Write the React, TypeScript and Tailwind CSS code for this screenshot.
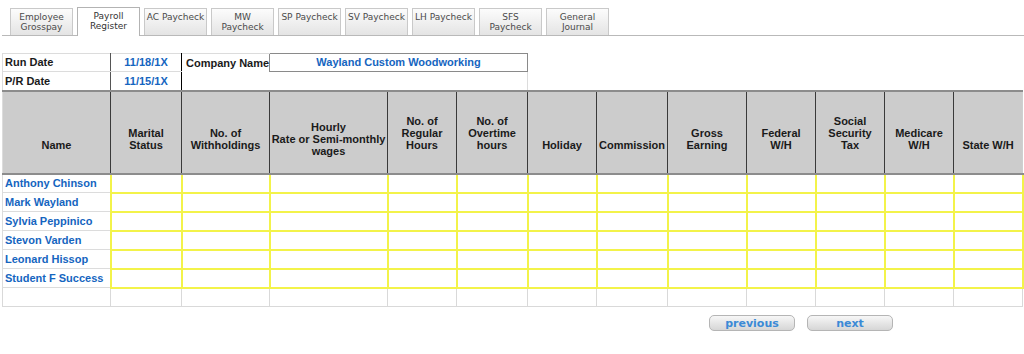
import { clsx } from 'clsx';

const tabs = [
  ['Employee', 'Grosspay'],
  ['Payroll', 'Register'],
  ['AC Paycheck'],
  ['MW', 'Paycheck'],
  ['SP Paycheck'],
  ['SV Paycheck'],
  ['LH Paycheck'],
  ['SFS', 'Paycheck'],
  ['General', 'Journal'],
];

const colWidths = [108, 71, 88, 118, 69, 71, 69, 71, 79, 69, 69, 69, 69];

const headers: { lines: string[]; pb?: string }[] = [
  { lines: ['Name'] },
  { lines: ['Marital', 'Status'] },
  { lines: ['No. of', 'Withholdings'] },
  { lines: ['Hourly', 'Rate or Semi-monthly', 'wages'], pb: 'pb-[16px]' },
  { lines: ['No. of', 'Regular', 'Hours'] },
  { lines: ['No. of', 'Overtime', 'hours'] },
  { lines: ['Holiday'] },
  { lines: ['Commission'] },
  { lines: ['Gross', 'Earning'] },
  { lines: ['Federal', 'W/H'] },
  { lines: ['Social', 'Security', 'Tax'] },
  { lines: ['Medicare', 'W/H'] },
  { lines: ['State W/H'] },
];

const employees = [
  'Anthony Chinson',
  'Mark Wayland',
  'Sylvia Peppinico',
  'Stevon Varden',
  'Leonard Hissop',
  'Student F Success',
];

export default function App() {
  return (
    <div className="w-[1024px] h-[354px] bg-white overflow-hidden">
      {/* Tabs */}
      <div className="ml-[2px] pl-[8px] pt-[7px] border-b border-[#b9b9b9] flex gap-[4px] h-[36px]">
        {tabs.map((t, i) => {
          const active = i === 1;
          return (
            <div
              key={i}
              className={clsx(
                'w-[63px] border border-b-0 text-center text-[9px] leading-[10px] pt-[3px] font-[family-name:DejaVu_Sans,Verdana,sans-serif]',
                active
                  ? 'h-[29px] -mb-[1px] bg-white border-[#b3b3b3] text-[#333]'
                  : 'h-[27px] mt-[1px] bg-gradient-to-b from-[#fcfcfc] to-[#e4e4e4] border-[#c9c9c9] text-[#4a4a4a]'
              )}
            >
              {t.map((l) => (
                <div key={l}>{l}</div>
              ))}
            </div>
          );
        })}
      </div>

      {/* Register table */}
      <table
        className="mt-[17px] ml-[2px] w-[1020px] border-collapse table-fixed text-[11px] font-bold font-[family-name:Liberation_Sans,Arial,sans-serif] text-[#1a1a1a]"
      >
        <colgroup>
          {colWidths.map((w, i) => (
            <col key={i} style={{ width: w }} />
          ))}
        </colgroup>
        <tbody>
          <tr>
            <td className="h-[18px] px-[2px] border border-[#dcdcdc] border-r-[#555]">Run Date</td>
            <td className="border border-[#dcdcdc] border-r-black text-center text-[#1565c0]">11/18/1X</td>
            <td className="px-[4px] border-t border-[#dcdcdc] whitespace-nowrap">Company Name</td>
            <td colSpan={3} className="border border-[#8a8a8a] text-center text-[#1565c0]">
              Wayland Custom Woodworking
            </td>
            <td colSpan={7} className="border-l border-[#dcdcdc]"></td>
          </tr>
          <tr>
            <td className="h-[19px] px-[2px] border border-[#dcdcdc] border-r-[#555]">P/R Date</td>
            <td className="border border-[#dcdcdc] border-r-black text-center text-[#1565c0]">11/15/1X</td>
            <td colSpan={4} className="border-r border-[#dcdcdc]"></td>
            <td colSpan={7}></td>
          </tr>
          <tr>
            {headers.map((h, i) => (
              <td
                key={i}
                className={clsx(
                  'h-[83px] bg-[#cccccc] align-bottom text-center leading-[12px] border-y-2 border-y-[#8c8c8c] border-x border-x-[#3a3a3a]',
                  h.pb ?? 'pb-[22px]',
                  i === 0 && 'border-l-[#dcdcdc]',
                  i === headers.length - 1 && 'border-r-[#cfcfcf]'
                )}
              >
                {h.lines.map((l) => (
                  <div key={l}>{l}</div>
                ))}
              </td>
            ))}
          </tr>
          {employees.map((name) => (
            <tr key={name}>
              <td className="h-[19px] px-[2px] border border-[#dcdcdc] text-[#1565c0] whitespace-nowrap">{name}</td>
              {colWidths.slice(1).map((_, i) => (
                <td key={i} className="border-2 border-[#f3f34a]"></td>
              ))}
            </tr>
          ))}
          <tr>
            {colWidths.map((_, i) => (
              <td key={i} className="h-[19px] border border-[#d9d9d9]"></td>
            ))}
          </tr>
        </tbody>
      </table>

      {/* Navigation */}
      <div className="flex justify-end gap-[12px] pr-[131px] mt-[8px]">
        {['previous', 'next'].map((b) => (
          <button
            key={b}
            className="w-[86px] h-[16px] rounded-[5px] border border-[#b5b5b5] bg-gradient-to-b from-[#f7f7f7] to-[#d6d6d6] text-[11px] leading-[13px] font-bold text-[#3b8ad6] font-[family-name:DejaVu_Sans,Verdana,sans-serif]"
          >
            {b}
          </button>
        ))}
      </div>
    </div>
  );
}
